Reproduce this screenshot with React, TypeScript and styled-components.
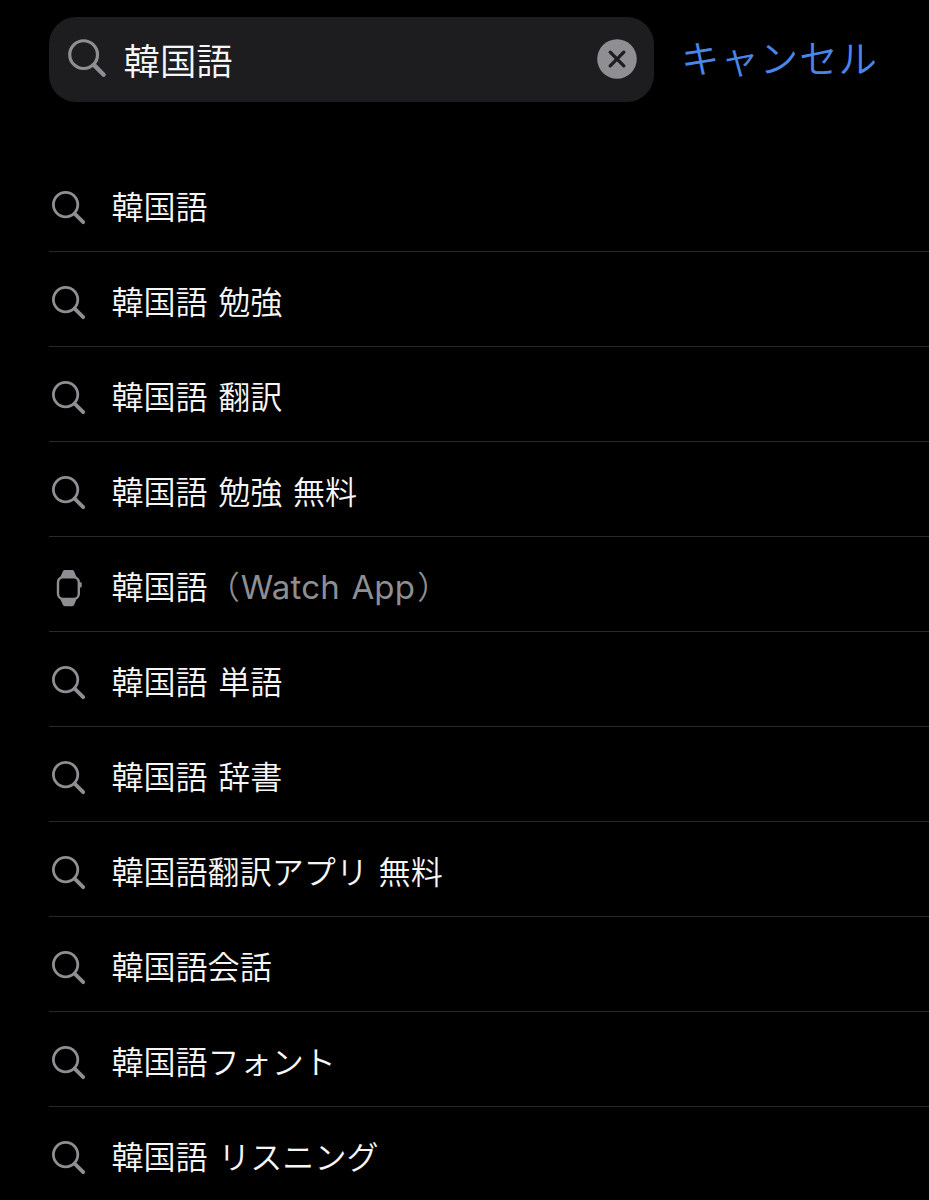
import React from 'react';
import styled, { createGlobalStyle } from 'styled-components';

const GlobalStyle = createGlobalStyle`
  *, *::before, *::after { box-sizing: border-box; }
  html, body { margin: 0; background: #000; }
  body {
    font-family: "Noto Sans CJK JP", sans-serif;
    color: #f6f6f7;
    overflow: hidden;
  }
`;

const Screen = styled.main`
  height: 1200px;
  overflow: hidden;
  background: #000;
  padding: 17px 0 0 49px;
`;

const Header = styled.header`
  display: flex;
  align-items: center;
  height: 85px;
`;

const SearchField = styled.div`
  display: flex;
  align-items: center;
  width: 605px;
  height: 85px;
  padding: 0 17.5px 2px 17.5px;
  border-radius: 27px;
  background: #1d1d1f;
`;

const Query = styled.span`
  flex: 1;
  margin-left: 16px;
  padding-top: 1px;
  font-size: 36.4px;
  font-weight: 350;
  line-height: 54px;
  white-space: nowrap;
`;

const ClearButton = styled.button`
  display: flex;
  padding: 0;
  border: 0;
  background: none;
`;

const CancelButton = styled.button`
  margin-left: 27px;
  padding: 0 0 8px;
  border: 0;
  background: none;
  color: #4a86e8;
  font: 350 38.4px/56px "Noto Sans CJK JP", sans-serif;
  letter-spacing: 1px;
  white-space: nowrap;
`;

const Suggestions = styled.ul`
  margin: 55px 0 0;
  padding: 0;
  list-style: none;
`;

const Suggestion = styled.li`
  display: flex;
  align-items: center;
  height: 95px;
  padding: 7px 0 0 2px;
  border-bottom: 1px solid #29292a;
`;

const Label = styled.span`
  margin-left: 24.4px;
  padding-bottom: 6px;
  font-size: 32.1px;
  font-weight: 350;
  line-height: 48px;
  word-spacing: 3.4px;
  white-space: pre;
`;

const Platform = styled.span`
  color: #8e8e93;
`;

const PlatformName = styled.span`
  margin: 0 2px 0 1px;
  font-family: Inter, sans-serif;
  font-size: 33px;
  font-weight: 400;
  line-height: 1;
  letter-spacing: 0.2px;
  word-spacing: 2px;
`;

const Icon = styled.svg`
  display: block;
  flex: none;
  color: #8e8e93;
`;

const SearchIcon = ({ size }: { size: number }) => (
  <Icon width={size} height={size} viewBox="0 0 36 36" fill="none" stroke="currentColor">
    <circle cx="14.6" cy="14.6" r="12.2" strokeWidth="2.8" />
    <path d="M23.6 23.6 32.2 32.2" strokeWidth="3.8" strokeLinecap="round" />
  </Icon>
);

const WatchIcon = () => (
  <Icon width="36" height="38" viewBox="0 0 36 38">
    <rect x="7" y="8.2" width="20.8" height="21.8" rx="5.2" fill="none" stroke="currentColor" strokeWidth="2.4" />
    <path
      d="M9.3 8 11.8 2.4Q12.4 1 13.8 1H21.2Q22.6 1 23.2 2.4L25.5 8ZM9.3 30.2 11.8 35.8Q12.4 37.2 13.8 37.2H21.2Q22.6 37.2 23.2 35.8L25.5 30.2Z"
      fill="currentColor"
    />
    <rect x="28.3" y="13.2" width="2.4" height="5.4" rx="1" fill="currentColor" />
  </Icon>
);

const ClearIcon = () => (
  <Icon width="40" height="40" viewBox="0 0 40 40">
    <circle cx="20" cy="20" r="19.8" fill="currentColor" />
    <path d="M13.2 13.2 26.8 26.8M26.8 13.2 13.2 26.8" stroke="#1d1d1f" strokeWidth="3.3" strokeLinecap="round" />
  </Icon>
);

type Item = { text: string; platform?: string };

const items: Item[] = [
  { text: '韓国語' },
  { text: '韓国語 勉強' },
  { text: '韓国語 翻訳' },
  { text: '韓国語 勉強 無料' },
  { text: '韓国語', platform: 'Watch App' },
  { text: '韓国語 単語' },
  { text: '韓国語 辞書' },
  { text: '韓国語翻訳アプリ 無料' },
  { text: '韓国語会話' },
  { text: '韓国語フォント' },
  { text: '韓国語 リスニング' },
];

export default function App() {
  return (
    <Screen lang="ja">
      <GlobalStyle />
      <Header>
        <SearchField>
          <SearchIcon size={41} />
          <Query>韓国語</Query>
          <ClearButton aria-label="クリア">
            <ClearIcon />
          </ClearButton>
        </SearchField>
        <CancelButton>キャンセル</CancelButton>
      </Header>
      <Suggestions>
        {items.map(({ text, platform }) => (
          <Suggestion key={text + (platform ?? '')}>
            {platform ? <WatchIcon /> : <SearchIcon size={36} />}
            <Label>
              {text}
              {platform && (
                <Platform>
                  （<PlatformName>{platform}</PlatformName>）
                </Platform>
              )}
            </Label>
          </Suggestion>
        ))}
      </Suggestions>
    </Screen>
  );
}
